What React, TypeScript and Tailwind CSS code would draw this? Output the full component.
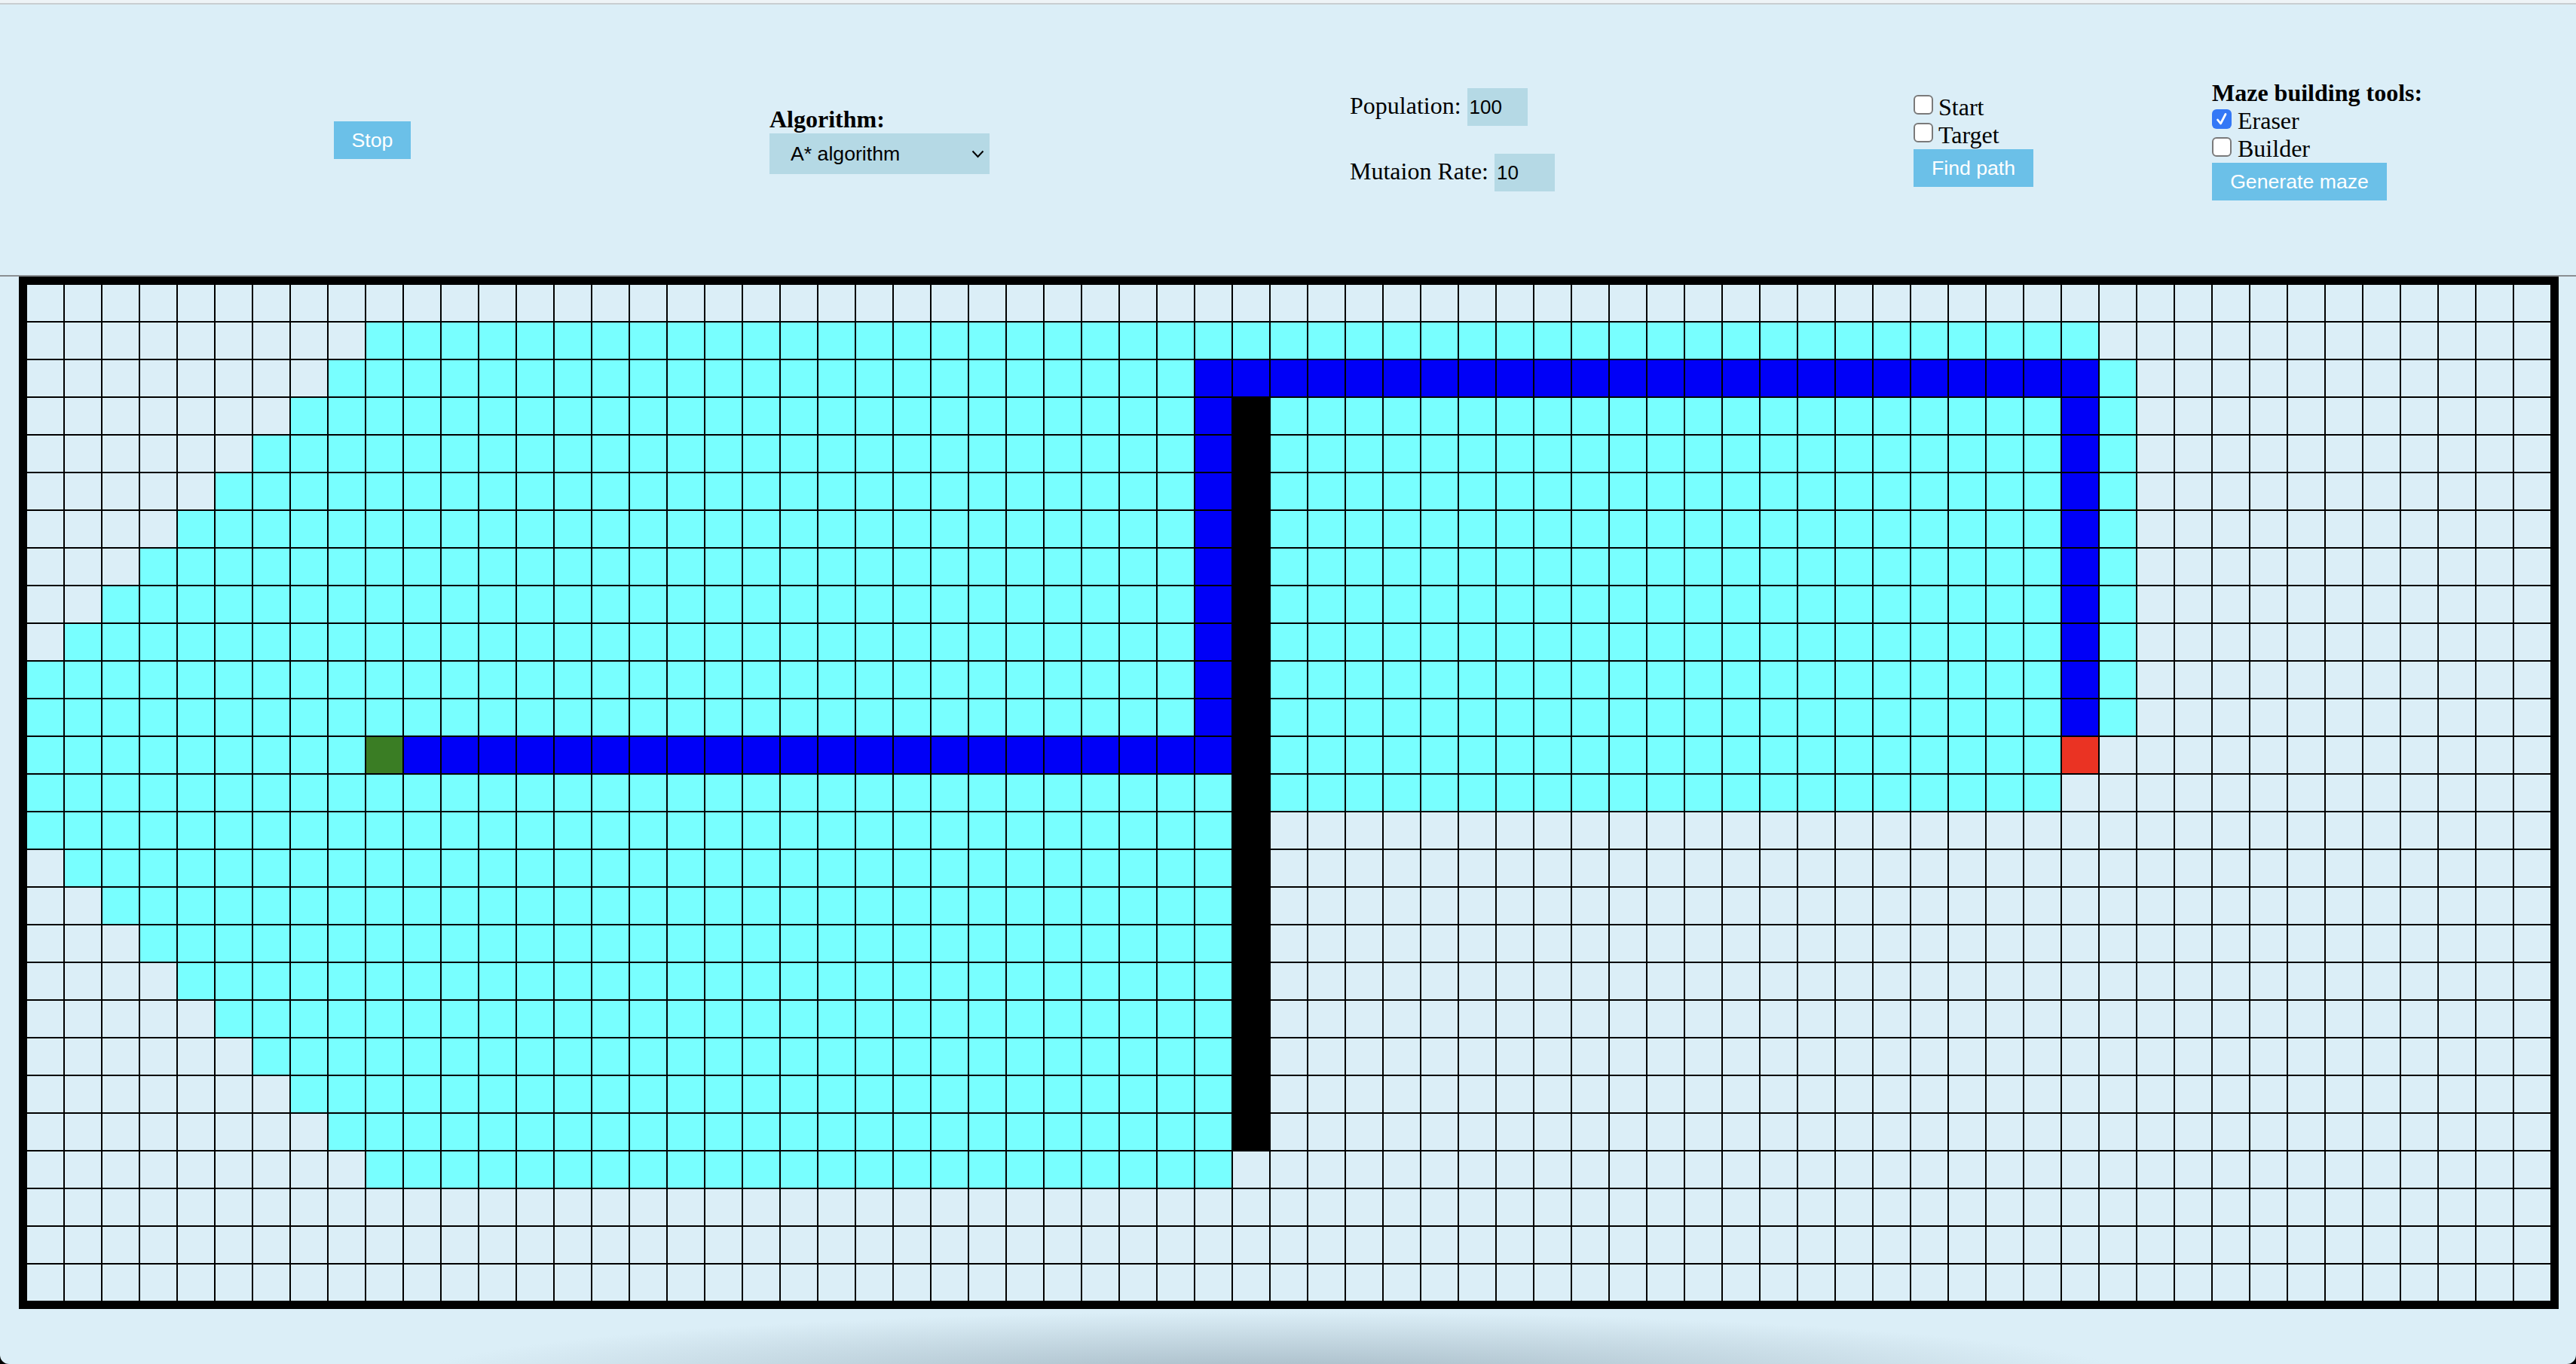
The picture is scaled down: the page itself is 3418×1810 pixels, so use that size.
import React from 'react';

type Kind = 'empty' | 'visited' | 'path' | 'wall' | 'start' | 'target';
const ROWS = 27;
const COLS = 67;

function kindOf(r: number, c: number): Kind {
  if (r === 12 && c === 9) return 'start';
  if (r === 12 && c === 54) return 'target';
  if (c === 32 && r >= 3 && r <= 22) return 'wall';
  if (r === 12 && c >= 10 && c <= 31) return 'path';
  if (c === 31 && r >= 2 && r <= 12) return 'path';
  if (r === 2 && c >= 31 && c <= 54) return 'path';
  if (c === 54 && r >= 2 && r <= 11) return 'path';
  const leftStart = r <= 10 ? 10 - r : r <= 14 ? 0 : r - 14;
  if (r >= 1 && r <= 23 && c >= leftStart && c <= 31) return 'visited';
  if (r === 1 && c >= 9 && c <= 54) return 'visited';
  if (r >= 2 && r <= 11 && c === 55) return 'visited';
  if (r >= 3 && r <= 13 && c >= 33 && c <= 53) return 'visited';
  return 'empty';
}

const kindClass: Record<Kind, string> = {
  empty: 'bg-[#dbeef7]',
  visited: 'bg-[#78ffff]',
  path: 'bg-[#0000f7]',
  wall: 'bg-black',
  start: 'bg-[#3a7d24]',
  target: 'bg-[#ea3323]',
};

function Box({ checked }: { checked?: boolean }) {
  if (checked) {
    return (
      <span className="mb-[6px] w-[26px] h-[26px] rounded-[6px] bg-[#3478f6] flex items-center justify-center shrink-0">
        <svg width="18" height="20" viewBox="0 0 18 20">
          <path d="M3.5 11 L7.5 16 L14 3.5" stroke="white" strokeWidth="2.8" fill="none" strokeLinecap="round" strokeLinejoin="round" />
        </svg>
      </span>
    );
  }
  return <span className="mb-[6px] w-[26px] h-[26px] rounded-[6px] border-2 border-[#7a7a7a] bg-white shrink-0" />;
}

const btn =
  "h-[50px] bg-[#6bc0e8] text-white text-[26.67px] font-['Liberation_Sans',Arial,sans-serif] flex items-center justify-center whitespace-nowrap";

export default function App() {
  const cells: React.ReactNode[] = [];
  for (let r = 0; r < ROWS; r++) {
    for (let c = 0; c < COLS; c++) {
      const k = kindOf(r, c);
      cells.push(<div key={r * COLS + c} className={'border border-black ' + kindClass[k]} />);
    }
  }

  return (
    <div className="w-[3418px] h-[1810px] bg-black">
      <div className="relative w-[3418px] h-[1810px] overflow-hidden bg-[#dbeef7] rounded-b-[12px] font-['Liberation_Serif','Times_New_Roman',serif] text-black">
        <div className="h-[4px] bg-[#eef3f6]" />
        <div className="h-[2px] bg-[#c8cdd0]" />
        <div className="h-[359px] flex items-center pl-[443px]">
          <button className={btn + ' w-[102px]'}>Stop</button>

          <div className="ml-[476px] w-[292px] flex flex-col">
            <div className="font-bold text-[32px] leading-[37px] whitespace-nowrap">Algorithm:</div>
            <div className="relative w-[292px] h-[54px]">
              <select
                defaultValue="astar"
                className="appearance-none w-[292px] h-[54px] bg-[#b5d9e5] pl-[28px] text-[26.67px] font-['Liberation_Sans',Arial,sans-serif] outline-none"
              >
                <option value="astar">A* algorithm</option>
                <option value="genetic">Genetic algorithm</option>
              </select>
              <svg className="absolute right-[7px] top-[22px] pointer-events-none" width="17" height="11" viewBox="0 0 17 11">
                <path d="M1.5 1.5 L8.5 9 L15.5 1.5" stroke="black" strokeWidth="2" fill="none" />
              </svg>
            </div>
          </div>

          <div className="ml-[478px] w-[270px] flex flex-col gap-[37px]">
            <div className="flex items-baseline whitespace-nowrap">
              <span className="text-[32px] leading-[37px]">Population:</span>
              <input
                defaultValue="100"
                className="ml-[8px] w-[80px] h-[50px] bg-[#b5d9e5] pl-[3px] text-[26px] font-['Liberation_Sans',Arial,sans-serif] outline-none"
              />
            </div>
            <div className="flex items-baseline whitespace-nowrap">
              <span className="text-[32px] leading-[37px]">Mutaion Rate:</span>
              <input
                defaultValue="10"
                className="ml-[8px] w-[80px] h-[50px] bg-[#b5d9e5] pl-[3px] text-[26px] font-['Liberation_Sans',Arial,sans-serif] outline-none"
              />
            </div>
          </div>

          <div className="ml-[478px] w-[159px] flex flex-col">
            <label className="h-[37px] flex items-center gap-[7px] text-[32px] leading-[37px]">
              <Box />
              <span>Start</span>
            </label>
            <label className="h-[37px] flex items-center gap-[7px] text-[32px] leading-[37px]">
              <Box />
              <span>Target</span>
            </label>
            <button className={btn + ' w-[159px]'}>Find path</button>
          </div>

          <div className="ml-[237px] w-[280px] flex flex-col">
            <div className="font-bold text-[32px] leading-[37px] whitespace-nowrap">Maze building tools:</div>
            <label className="h-[37px] flex items-center gap-[8px] text-[32px] leading-[37px]">
              <Box checked />
              <span>Eraser</span>
            </label>
            <label className="h-[37px] flex items-center gap-[8px] text-[32px] leading-[37px]">
              <Box />
              <span>Builder</span>
            </label>
            <button className={btn + ' w-[232px]'}>Generate maze</button>
          </div>
        </div>
        <div className="h-[2px] bg-[#8a8f93]" />

        <div className="ml-[25px] w-[3370px] border-[10px] border-black grid grid-cols-[repeat(67,50px)] grid-rows-[repeat(27,50px)]">
          {cells}
        </div>

        <div className="absolute left-[545px] top-[1740px] w-[2290px] h-[90px] bg-[radial-gradient(ellipse_50%_100%_at_50%_100%,rgba(160,180,192,0.95),rgba(219,238,247,0))]" />
      </div>
    </div>
  );
}
